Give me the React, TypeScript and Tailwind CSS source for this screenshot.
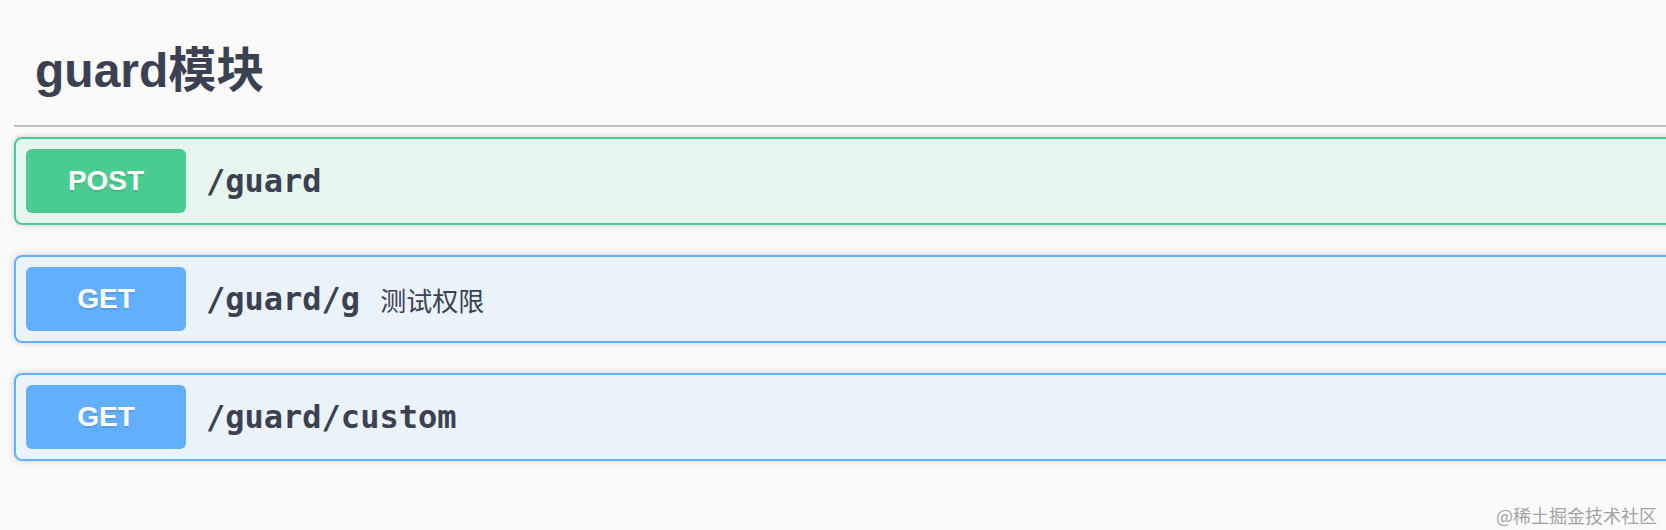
import React from "react";

type Op = {
  method: "POST" | "GET";
  path: string;
  summary?: string;
};

const ops: Op[] = [
  { method: "POST", path: "/guard" },
  { method: "GET", path: "/guard/g", summary: "测试权限" },
  { method: "GET", path: "/guard/custom" },
];

const styles = {
  POST: {
    block: "border-[#49cc90] bg-[#49cc90]/10",
    badge: "bg-[#49cc90]",
  },
  GET: {
    block: "border-[#61affe] bg-[#61affe]/10",
    badge: "bg-[#61affe]",
  },
};

function OpBlock({ op }: { op: Op }) {
  const s = styles[op.method];
  return (
    <div
      className={`mb-[30px] flex items-center rounded-[8px] border-2 p-[10px] shadow-[0_0_6px_rgba(0,0,0,0.19)] ${s.block}`}
    >
      <span
        className={`flex h-[64px] w-[160px] items-center justify-center rounded-[6px] font-['Liberation_Sans',Arial,sans-serif] text-[28px] font-bold text-white [text-shadow:0_2px_0_rgba(0,0,0,0.1)] ${s.badge}`}
      >
        {op.method}
      </span>
      <span className="px-[20px] font-['DejaVu_Sans_Mono',monospace] text-[32px] font-bold text-[#3b4151]">
        {op.path}
      </span>
      {op.summary && (
        <span className="font-['Noto_Sans_CJK_SC',sans-serif] text-[26px] text-[#3b4151]">
          {op.summary}
        </span>
      )}
    </div>
  );
}

export default function App() {
  return (
    <div className="relative h-[530px] w-[1666px] overflow-hidden bg-[#fafafa]">
      <div className="w-[1720px] pl-[14px]">
        <h3 className="mb-[10px] border-b-2 border-[#3b4151]/30 pb-[26px] pl-[21px] pt-[43px] font-['Liberation_Sans','Noto_Sans_CJK_SC',sans-serif] text-[48px] font-bold leading-[56px] text-[#3b4151]">
          guard模块
        </h3>
        {ops.map((op) => (
          <OpBlock key={op.path} op={op} />
        ))}
      </div>
      <div className="absolute bottom-[6px] right-[9px] font-['Noto_Sans_CJK_SC',sans-serif] text-[18px] leading-[18px] text-[#a3a3a3]">
        @稀土掘金技术社区
      </div>
    </div>
  );
}
